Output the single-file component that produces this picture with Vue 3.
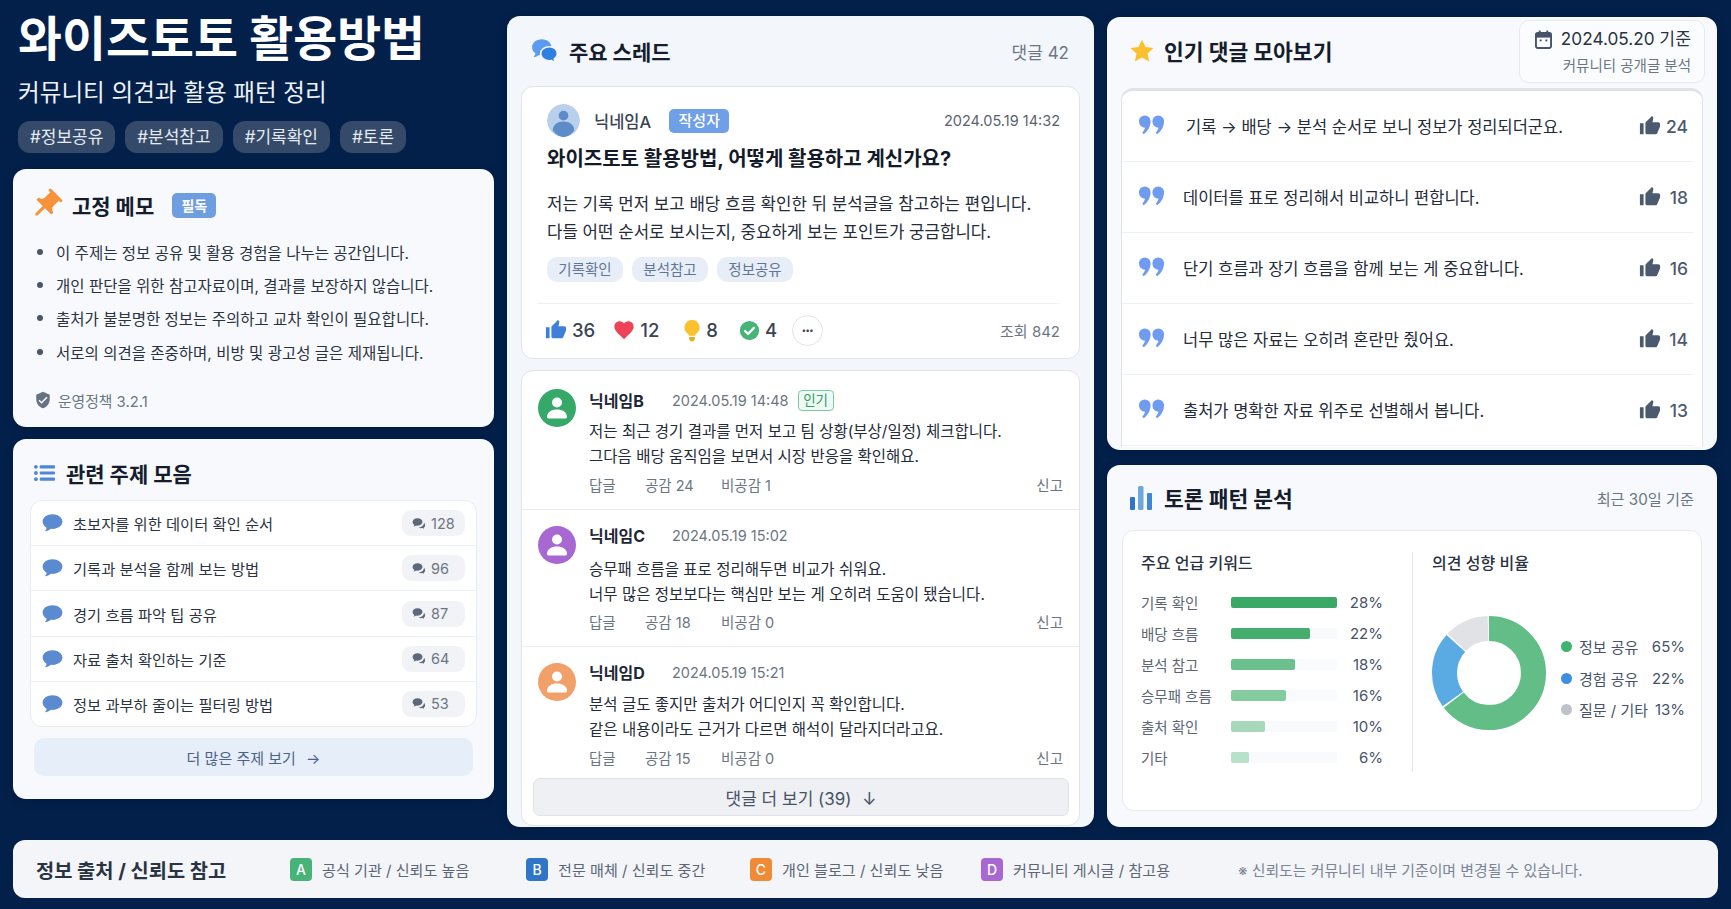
<template>
  <div class="page">
    <svg class="icon-defs" width="0" height="0" aria-hidden="true">
      <symbol id="thumb" viewBox="0 0 24 24">
        <path d="M1 21h4V9H1v12zm22-11c0-1.1-.9-2-2-2h-6.31l.95-4.57.03-.32c0-.41-.17-.79-.44-1.06L14.17 1 7.59 7.59C7.22 7.95 7 8.45 7 9v10c0 1.1.9 2 2 2h9c.83 0 1.54-.5 1.84-1.22l3.02-7.05c.09-.23.14-.47.14-.73v-2z" />
      </symbol>
      <symbol id="bubble" viewBox="0 0 24 22">
        <path d="M12 1C5.6 1 .7 4.6.7 9.4c0 2.9 1.8 5.4 4.6 6.9-.2 1.6-.9 3-2.1 4.2 2.6-.2 5-1.2 6.7-2.9.7.1 1.4.2 2.1.2 6.4 0 11.3-3.7 11.3-8.4S18.4 1 12 1z" />
      </symbol>
      <symbol id="chat" viewBox="0 0 24 22">
        <path d="M9.5 2C4.8 2 1 4.9 1 8.5c0 2 1.2 3.8 3 5-.1 1-.6 1.9-1.3 2.7 1.7-.1 3.2-.8 4.3-1.8.8.2 1.6.3 2.5.3 4.7 0 8.5-2.9 8.5-6.5S14.2 2 9.5 2z" />
        <path d="M20.5 9.5c.1 4.3-3.8 7.7-9 8 1.2 1 2.9 1.5 4.6 1.5.6 0 1.2-.1 1.8-.2.9.8 2 1.3 3.3 1.4-.5-.6-.9-1.3-1-2.1 1.4-.9 2.3-2.3 2.3-3.8 0-1.9-1-3.6-2-4.8z" />
      </symbol>
      <symbol id="quote" viewBox="0 0 26 20">
        <path d="M6 0a6 6 0 0 1 6 6.5c0 5-3 10-7 13L3.3 18c1.6-1.7 2.5-3.2 3-5.1A6.3 6.3 0 0 1 0 6.5 6 6 0 0 1 6 0z" />
        <path d="M20 0a6 6 0 0 1 6 6.5c0 5-3 10-7 13L17.3 18c1.6-1.7 2.5-3.2 3-5.1A6.3 6.3 0 0 1 14 6.5 6 6 0 0 1 20 0z" />
      </symbol>
    </svg>

    <div class="left-col">
      <header class="hero">
        <h1>와이즈토토 활용방법</h1>
        <p>커뮤니티 의견과 활용 패턴 정리</p>
        <div class="hero-tags">
          <span v-for="tag in heroTags" :key="tag">{{ tag }}</span>
        </div>
      </header>

      <section class="card memo">
        <div class="card-head">
          <svg class="pin" viewBox="0 0 24 24">
            <path transform="rotate(45 12 12)" d="M16 9V4h1c.55 0 1-.45 1-1s-.45-1-1-1H7c-.55 0-1 .45-1 1s.45 1 1 1h1v5c0 1.66-1.34 3-3 3v2h5.97v7l1 1 1-1v-7H19v-2c-1.66 0-3-1.34-3-3z" />
          </svg>
          <h2>고정 메모</h2>
          <span class="must">필독</span>
        </div>
        <ul>
          <li v-for="note in notes" :key="note">{{ note }}</li>
        </ul>
        <div class="policy">
          <svg viewBox="0 0 24 24">
            <path d="M12 1L3 5v6c0 5.55 3.84 10.74 9 12 5.16-1.26 9-6.45 9-12V5l-9-4zm-2 16l-4-4 1.41-1.41L10 14.17l6.59-6.59L18 9l-8 8z" />
          </svg>
          운영정책 3.2.1
        </div>
      </section>

      <section class="card topics">
        <div class="card-head">
          <svg class="list-icon" viewBox="0 0 22 18">
            <circle cx="2" cy="2.5" r="2" />
            <circle cx="2" cy="9" r="2" />
            <circle cx="2" cy="15.5" r="2" />
            <rect x="6" y="1" width="16" height="3.2" rx="1" />
            <rect x="6" y="7.4" width="16" height="3.2" rx="1" />
            <rect x="6" y="13.8" width="16" height="3.2" rx="1" />
          </svg>
          <h2>관련 주제 모음</h2>
        </div>
        <div class="topic-list">
          <div v-for="topic in topics" :key="topic.title" class="topic-row">
            <svg class="topic-bubble"><use href="#bubble" /></svg>
            <span class="topic-title">{{ topic.title }}</span>
            <span class="topic-count">
              <svg><use href="#chat" /></svg>
              {{ topic.count }}
            </span>
          </div>
        </div>
        <button class="more-topics">더 많은 주제 보기 <span>→</span></button>
      </section>
    </div>

    <section class="card thread">
      <div class="thread-head">
        <svg class="thread-icon" viewBox="0 0 26 24">
          <path fill="#5b9cf0" d="M10 1C4.9 1 1 4.3 1 8.5c0 2.3 1.2 4.3 3.1 5.7-.2 1.3-.8 2.5-1.7 3.4 2-.1 3.7-.9 5-2 .8.2 1.7.3 2.6.3 5.1 0 9-3.2 9-7.4S15.1 1 10 1z" />
          <path fill="#2f7fe0" stroke="#f3f6fa" stroke-width="1.5" d="M17 8c-4.4 0-8 2.9-8 6.5s3.6 6.5 8 6.5c.7 0 1.4-.1 2-.2 1 .9 2.3 1.5 3.9 1.6-.7-.8-1.2-1.7-1.4-2.8 1.7-1.2 3-3 3-5.1C24.5 10.900 21.4 8 17 8z" />
        </svg>
        <h2>주요 스레드</h2>
        <span class="thread-count">댓글 42</span>
      </div>

      <article class="post">
        <div class="post-meta">
          <svg class="post-avatar" viewBox="0 0 34 34">
            <circle cx="17" cy="17" r="17" fill="#b9d0ec" />
            <circle cx="17" cy="12" r="5" fill="#5d8cc9" />
            <path fill="#5d8cc9" d="M6 27c0-6 5-9 11-9s11 3 11 9c-3 4.5-7 7-11 7s-8-2.5-11-7z" />
          </svg>
          <span class="post-name">닉네임A</span>
          <span class="author-badge">작성자</span>
          <span class="post-date">2024.05.19 14:32</span>
        </div>
        <h3>와이즈토토 활용방법, 어떻게 활용하고 계신가요?</h3>
        <p>저는 기록 먼저 보고 배당 흐름 확인한 뒤 분석글을 참고하는 편입니다.<br />다들 어떤 순서로 보시는지, 중요하게 보는 포인트가 궁금합니다.</p>
        <div class="post-tags">
          <span v-for="tag in postTags" :key="tag">{{ tag }}</span>
        </div>
        <div class="reactions">
          <span class="reaction r-like">
            <svg viewBox="0 0 24 24" fill="#3f7fd9"><use href="#thumb" /></svg>36
          </span>
          <span class="reaction r-heart">
            <svg viewBox="0 0 24 24"><path fill="#ee4256" d="M12 22l-1.6-1.5C5 15.6 1.5 12.4 1.5 8.3 1.5 5 4 2.5 7.3 2.5c1.8 0 3.6.9 4.7 2.3 1.1-1.4 2.9-2.3 4.7-2.3 3.3 0 5.8 2.5 5.8 5.8 0 4.1-3.5 7.3-8.9 12.2L12 22z" /></svg>12
          </span>
          <span class="reaction r-bulb">
            <svg viewBox="0 0 20 26">
              <path fill="#fbc02d" d="M10 1a8.5 8.5 0 0 0-5 15.4c1 .8 1.5 1.7 1.6 2.6h6.8c.1-.9.6-1.8 1.6-2.6A8.5 8.5 0 0 0 10 1z" />
              <path fill="#e8ac20" d="M6.8 20.3h6.4v1.8a3.2 3.2 0 0 1-6.4 0z" />
            </svg>8
          </span>
          <span class="reaction r-check">
            <svg viewBox="0 0 24 24">
              <circle cx="12" cy="12" r="11" fill="#47b377" />
              <path fill="none" stroke="#fff" stroke-width="2.6" stroke-linecap="round" stroke-linejoin="round" d="M7 12.5l3.4 3.4L17 9" />
            </svg>4
          </span>
          <span class="more-dots">•••</span>
          <span class="views">조회 842</span>
        </div>
      </article>

      <div class="comments">
        <div v-for="c in comments" :key="c.name" class="comment">
          <svg class="comment-avatar" viewBox="0 0 38 38">
            <circle cx="19" cy="19" r="19" :fill="c.color" />
            <circle cx="19" cy="13.5" r="5" fill="#fff" />
            <path fill="#fff" d="M9 28c0-5 4.5-7.5 10-7.5S29 23 29 28c0 1-1 1.5-2 1.5H11c-1 0-2-.5-2-1.5z" />
          </svg>
          <div class="comment-main">
            <div class="comment-meta">
              <strong>{{ c.name }}</strong>
              <span class="comment-date">{{ c.date }}</span>
              <span v-if="c.hot" class="hot">인기</span>
            </div>
            <p>{{ c.line1 }}<br />{{ c.line2 }}</p>
            <div class="comment-actions">
              <span class="a-reply">답글</span>
              <span class="a-like">공감 {{ c.up }}</span>
              <span>비공감 {{ c.down }}</span>
              <span class="a-report">신고</span>
            </div>
          </div>
        </div>
        <button class="more-comments">댓글 더 보기 (39) <span>↓</span></button>
      </div>
    </section>

    <div class="right-col">
      <section class="card popular">
        <div class="card-head">
          <svg class="star" viewBox="0 0 24 24">
            <path fill="#fbc02d" d="M12 1.5l3.2 6.9 7.5.9-5.6 5.1 1.5 7.4L12 18.1l-6.6 3.700 1.5-7.4L1.3 9.3l7.5-.9z" />
          </svg>
          <h2>인기 댓글 모아보기</h2>
        </div>
        <div class="date-box">
          <div class="date-main">
            <svg viewBox="0 0 18 20">
              <rect x="1" y="3" width="16" height="16" rx="2" fill="none" stroke="#47536a" stroke-width="2" />
              <rect x="1" y="3" width="16" height="5" fill="#47536a" />
              <rect x="4" y="0.5" width="2" height="4" fill="#47536a" />
              <rect x="12" y="0.5" width="2" height="4" fill="#47536a" />
              <rect x="5" y="10" width="2" height="2" fill="#47536a" />
              <rect x="11" y="10" width="2" height="2" fill="#47536a" />
            </svg>
            2024.05.20 기준
          </div>
          <div class="date-sub">커뮤니티 공개글 분석</div>
        </div>
        <div class="popular-list">
          <div v-for="item in popular" :key="item.text" class="popular-row">
            <svg class="quote"><use href="#quote" /></svg>
            <span class="popular-text">{{ item.text }}</span>
            <svg class="popular-thumb"><use href="#thumb" /></svg>
            <span class="popular-num">{{ item.likes }}</span>
          </div>
        </div>
      </section>

      <section class="card pattern">
        <div class="card-head">
          <svg class="bars-icon" viewBox="0 0 22 24">
            <rect x="0" y="11" width="5" height="13" rx="1" fill="#2f76c9" />
            <rect x="8" y="0" width="5.5" height="24" rx="1.5" fill="#6fa6dc" />
            <rect x="17" y="7" width="5" height="17" rx="1" fill="#3f86d6" />
          </svg>
          <h2>토론 패턴 분석</h2>
          <span class="period">최근 30일 기준</span>
        </div>
        <div class="pattern-body">
          <div class="keywords">
            <h4>주요 언급 키워드</h4>
            <div v-for="k in keywords" :key="k.label" class="kw-row">
              <span class="kw-label">{{ k.label }}</span>
              <span class="kw-track"><i :style="{ width: k.width + 'px', background: k.color }"></i></span>
              <span class="kw-pct">{{ k.pct }}%</span>
            </div>
          </div>
          <div class="opinions">
            <h4>의견 성향 비율</h4>
            <div class="opinion-body">
              <svg class="donut" viewBox="0 0 114 114">
                <circle
                  v-for="seg in segments"
                  :key="seg.color"
                  cx="57" cy="57" r="44.5" fill="none"
                  stroke-width="25"
                  :stroke="seg.color"
                  :stroke-dasharray="seg.dash"
                  :stroke-dashoffset="seg.offset"
                  transform="rotate(-90 57 57)"
                />
              </svg>
              <div class="legend">
                <div v-for="l in legend" :key="l.label" class="legend-row">
                  <i :style="{ background: l.color }"></i>
                  <span>{{ l.label }}</span>
                  <b>{{ l.pct }}%</b>
                </div>
              </div>
            </div>
          </div>
        </div>
      </section>
    </div>

    <footer class="sources">
      <h2>정보 출처 / 신뢰도 참고</h2>
      <div v-for="s in sources" :key="s.key" class="source">
        <span class="source-key" :style="{ background: s.color }">{{ s.key }}</span>
        {{ s.label }}
      </div>
      <div class="source-note">※ 신뢰도는 커뮤니티 내부 기준이며 변경될 수 있습니다.</div>
    </footer>
  </div>
</template>

<script setup>
const heroTags = ['#정보공유', '#분석참고', '#기록확인', '#토론']
const postTags = ['기록확인', '분석참고', '정보공유']

const notes = [
  '이 주제는 정보 공유 및 활용 경험을 나누는 공간입니다.',
  '개인 판단을 위한 참고자료이며, 결과를 보장하지 않습니다.',
  '출처가 불분명한 정보는 주의하고 교차 확인이 필요합니다.',
  '서로의 의견을 존중하며, 비방 및 광고성 글은 제재됩니다.'
]

const topics = [
  { title: '초보자를 위한 데이터 확인 순서', count: 128 },
  { title: '기록과 분석을 함께 보는 방법', count: 96 },
  { title: '경기 흐름 파악 팁 공유', count: 87 },
  { title: '자료 출처 확인하는 기준', count: 64 },
  { title: '정보 과부하 줄이는 필터링 방법', count: 53 }
]

const comments = [
  {
    name: '닉네임B', date: '2024.05.19 14:48', hot: true, color: '#36a867',
    line1: '저는 최근 경기 결과를 먼저 보고 팀 상황(부상/일정) 체크합니다.',
    line2: '그다음 배당 움직임을 보면서 시장 반응을 확인해요.',
    up: 24, down: 1
  },
  {
    name: '닉네임C', date: '2024.05.19 15:02', hot: false, color: '#a868d2',
    line1: '승무패 흐름을 표로 정리해두면 비교가 쉬워요.',
    line2: '너무 많은 정보보다는 핵심만 보는 게 오히려 도움이 됐습니다.',
    up: 18, down: 0
  },
  {
    name: '닉네임D', date: '2024.05.19 15:21', hot: false, color: '#f2a06a',
    line1: '분석 글도 좋지만 출처가 어디인지 꼭 확인합니다.',
    line2: '같은 내용이라도 근거가 다르면 해석이 달라지더라고요.',
    up: 15, down: 0
  }
]

const popular = [
  { text: '기록 → 배당 → 분석 순서로 보니 정보가 정리되더군요.', likes: 24 },
  { text: '데이터를 표로 정리해서 비교하니 편합니다.', likes: 18 },
  { text: '단기 흐름과 장기 흐름을 함께 보는 게 중요합니다.', likes: 16 },
  { text: '너무 많은 자료는 오히려 혼란만 줬어요.', likes: 14 },
  { text: '출처가 명확한 자료 위주로 선별해서 봅니다.', likes: 13 }
]

const keywords = [
  { label: '기록 확인', pct: 28, width: 106, color: '#3aa866' },
  { label: '배당 흐름', pct: 22, width: 79, color: '#45ae6d' },
  { label: '분석 참고', pct: 18, width: 64, color: '#6cc08d' },
  { label: '승무패 흐름', pct: 16, width: 55, color: '#85cba0' },
  { label: '출처 확인', pct: 10, width: 34, color: '#a5d9b9' },
  { label: '기타', pct: 6, width: 18, color: '#b7e1c8' }
]

const legend = [
  { label: '정보 공유', pct: 65, color: '#3fb36f' },
  { label: '경험 공유', pct: 22, color: '#3f8fdc' },
  { label: '질문 / 기타', pct: 13, color: '#bfc3c9' }
]

const donutColors = ['#62bd87', '#5aaae3', '#e0e2e5']
const circumference = 2 * Math.PI * 44.5
let used = 0
const segments = legend.map((l, i) => {
  const len = (l.pct / 100) * circumference
  const seg = {
    color: donutColors[i],
    dash: `${len - 1.5} ${circumference - len + 1.5}`,
    offset: -used
  }
  used += len
  return seg
})

const sources = [
  { key: 'A', label: '공식 기관 / 신뢰도 높음', color: '#47b377' },
  { key: 'B', label: '전문 매체 / 신뢰도 중간', color: '#2f76c9' },
  { key: 'C', label: '개인 블로그 / 신뢰도 낮음', color: '#f08a35' },
  { key: 'D', label: '커뮤니티 게시글 / 참고용', color: '#a868d2' }
]
</script>

<style>
html,
body {
  margin: 0;
  background: #02204a;
}
</style>

<style scoped>
.page {
  box-sizing: border-box;
  width: 1731px;
  height: 909px;
  overflow: hidden;
  padding: 16px 13px 11px;
  display: grid;
  grid-template-columns: 481px 587px 610px;
  grid-template-rows: 811px 58px;
  column-gap: 13px;
  row-gap: 13px;
  background: #02204a;
  color: #1b2434;
  font-family: Inter, "Noto Sans CJK KR", sans-serif;
}

.icon-defs {
  position: absolute;
}

h1, h2, h3, h4, p, ul {
  margin: 0;
  padding: 0;
}

button {
  font-family: inherit;
  cursor: pointer;
}

.card {
  box-sizing: border-box;
  background: #f7f9fc;
  border-radius: 13px;
  box-shadow: 0 2px 8px rgba(0, 10, 40, 0.25);
}

.card-head {
  display: flex;
  align-items: center;
}

.card-head h2 {
  font-size: 21.5px;
  font-weight: 700;
  color: #151d2c;
}

/* left column */
.left-col {
  display: flex;
  flex-direction: column;
}

.hero {
  height: 153px;
  padding-left: 5px;
  color: #fff;
}

.hero h1 {
  font-size: 47.8px;
  line-height: 52px;
  font-weight: 700;
  margin-top: -3px;
}

.hero p {
  font-size: 23.6px;
  line-height: 32px;
  margin-top: 12px;
  color: #eef2f8;
}

.hero-tags {
  display: flex;
  gap: 10px;
  margin-top: 12px;
}

.hero-tags span {
  height: 32px;
  line-height: 32px;
  padding: 0 12px;
  border-radius: 12px;
  background: #354a69;
  color: #e6ebf3;
  font-size: 17px;
}

.memo {
  height: 258px;
  padding: 18px 21px 0;
}

.pin {
  width: 36px;
  height: 36px;
  fill: #f5923a;
  margin-left: -6px;
  margin-right: 8px;
}

.memo h2 {
  font-size: 21px;
}

.must {
  margin-left: 18px;
  width: 44px;
  height: 25px;
  line-height: 25px;
  text-align: center;
  border-radius: 5px;
  background: #6f9ee0;
  color: #fff;
  font-size: 14px;
  font-weight: 700;
}

.memo ul {
  margin-top: 12px;
  padding-left: 3px;
  list-style: none;
}

.memo li {
  display: flex;
  align-items: center;
  height: 33.4px;
  font-size: 15.5px;
  color: #2a3342;
}

.memo li::before {
  content: "";
  flex: none;
  width: 6px;
  height: 6px;
  margin-right: 13px;
  border-radius: 50%;
  background: #4a5668;
}

.policy {
  display: flex;
  align-items: center;
  gap: 6px;
  margin-top: 21px;
  font-size: 14.8px;
  color: #6b7684;
}

.policy svg {
  width: 18px;
  height: 18px;
  fill: #667284;
}

.topics {
  height: 360px;
  margin-top: 12px;
  padding: 19px 17px 0;
}

.topics h2 {
  font-size: 21px;
}

.list-icon {
  width: 21px;
  height: 18px;
  margin-left: 4px;
  margin-right: 11px;
  fill: #4f86d6;
}

.topic-list {
  display: flex;
  flex-direction: column;
  margin-top: 12px;
  height: 227px;
  box-sizing: border-box;
  background: #fff;
  border: 1px solid #e8ecf2;
  border-radius: 12px;
}

.topic-row {
  flex: 1;
  display: flex;
  align-items: center;
  padding: 0 11px;
  border-bottom: 1px solid #edf0f4;
  box-sizing: border-box;
}

.topic-row:last-child {
  border-bottom: 0;
}

.topic-bubble {
  width: 21px;
  height: 20px;
  fill: #5a8ad0;
  margin-right: 10px;
}

.topic-title {
  flex: 1;
  font-size: 15.3px;
  color: #2a3342;
}

.topic-count {
  display: flex;
  align-items: center;
  gap: 5px;
  box-sizing: border-box;
  width: 63px;
  height: 26px;
  padding-left: 10px;
  border-radius: 9px;
  background: #f1f3f7;
  color: #6b7684;
  font-size: 14.5px;
}

.topic-count svg {
  width: 14px;
  height: 13px;
  fill: #5d6878;
}

.more-topics {
  display: block;
  width: 439px;
  height: 38px;
  margin: 11px 0 0 4px;
  border: 0;
  border-radius: 10px;
  background: #e6eef9;
  color: #4d6288;
  font-size: 15px;
}

.more-topics span {
  margin-left: 6px;
}

/* thread */
.thread {
  height: 811px;
  padding: 0 14px;
  background: #f3f6fa;
}

.thread-head {
  display: flex;
  align-items: center;
  height: 70px;
}

.thread-icon {
  width: 28px;
  height: 26px;
  margin: 0 10px;
}

.thread-head h2 {
  flex: 1;
  font-size: 21px;
  font-weight: 700;
  color: #151d2c;
}

.thread-count {
  margin-right: 11px;
  font-size: 17px;
  color: #6b7684;
}

.post {
  box-sizing: border-box;
  height: 273px;
  padding: 0 19px 0 25px;
  background: #fff;
  border: 1px solid #dfe4ea;
  border-radius: 12px;
}

.post-meta {
  display: flex;
  align-items: center;
  height: 33px;
  margin-top: 17px;
}

.post-avatar {
  width: 33px;
  height: 33px;
  border-radius: 50%;
  margin-right: 14px;
}

.post-name {
  font-size: 16.5px;
  color: #3a4454;
  font-weight: 500;
}

.author-badge {
  margin-left: 18px;
  width: 60px;
  height: 24px;
  line-height: 24px;
  text-align: center;
  border-radius: 5px;
  background: #6f9fe6;
  color: #fff;
  font-size: 15px;
  font-weight: 500;
}

.post-date {
  margin-left: auto;
  font-size: 14.5px;
  color: #59636f;
}

.post h3 {
  margin-top: 8px;
  font-size: 20px;
  line-height: 28px;
  font-weight: 700;
  color: #141b28;
}

.post p {
  margin-top: 17px;
  font-size: 16.8px;
  line-height: 28px;
  color: #242c3a;
}

.post-tags {
  display: flex;
  gap: 9px;
  margin-top: 11px;
}

.post-tags span {
  width: 76px;
  height: 25px;
  line-height: 25px;
  text-align: center;
  border-radius: 10px;
  background: #e8eef7;
  color: #5f7698;
  font-size: 14.5px;
}

.reactions {
  display: flex;
  align-items: center;
  height: 52px;
  margin: 21px 0 0 -10px;
  padding-left: 8px;
  border-top: 1px solid #eef1f4;
  font-size: 18.5px;
  color: #3a4454;
}

.reaction {
  display: flex;
  align-items: center;
  font-weight: 500;
}

.reaction svg {
  margin-right: 5px;
}

.r-like svg {
  width: 22px;
  height: 22px;
}

.r-heart {
  margin-left: 18px;
}

.r-heart svg {
  width: 22px;
  height: 22px;
}

.r-bulb {
  margin-left: 24px;
}

.r-bulb svg {
  width: 18px;
  height: 23px;
}

.r-check {
  margin-left: 21px;
}

.r-check svg {
  width: 21px;
  height: 21px;
}

.more-dots {
  width: 31px;
  height: 31px;
  margin-left: 15px;
  text-align: center;
  box-sizing: border-box;
  border: 1px solid #dfe4ea;
  border-radius: 50%;
  font-size: 8px;
  font-weight: 700;
  line-height: 29px;
  color: #3a4454;
}

.views {
  margin-left: auto;
  font-size: 15px;
  color: #6b7684;
}

.comments {
  box-sizing: border-box;
  height: 456px;
  margin-top: 11px;
  background: #fff;
  border: 1px solid #dfe4ea;
  border-radius: 12px;
}

.comment {
  display: flex;
  box-sizing: border-box;
  height: 137px;
  padding: 14px 16px 0;
  border-bottom: 1px solid #e9edf1;
}

.comment:first-child {
  height: 139px;
  padding-top: 18px;
}

.comment:last-of-type {
  border-bottom: 0;
  height: 131px;
}

.comment-avatar {
  flex: none;
  width: 38px;
  height: 38px;
  margin: 2px 13px 0 0;
}

.comment:first-child .comment-avatar {
  margin-top: 0;
}

.comment-main {
  flex: 1;
}

.comment-meta {
  display: flex;
  align-items: center;
  height: 22px;
}

.comment-meta strong {
  width: 83px;
  font-size: 16px;
  font-weight: 700;
  color: #1e2737;
}

.comment-date {
  font-size: 14.5px;
  color: #6b7684;
}

.hot {
  margin-left: 9px;
  width: 36px;
  height: 21px;
  line-height: 19px;
  box-sizing: border-box;
  text-align: center;
  border: 1px solid #7cc9a0;
  border-radius: 4px;
  background: #eefaf3;
  color: #2f9e6a;
  font-size: 13.5px;
}

.comment-main p {
  margin-top: 11px;
  font-size: 15.5px;
  line-height: 25px;
  color: #242c3a;
}

.comment:first-child .comment-main p {
  margin-top: 8px;
}

.comment:last-of-type .comment-main p {
  margin-top: 9px;
}

.comment-actions {
  display: flex;
  margin-top: 6px;
  font-size: 14.5px;
  line-height: 20px;
  color: #6b7684;
}

.comment:first-child .comment-actions,
.comment:last-of-type .comment-actions {
  margin-top: 7px;
}

.a-reply {
  width: 56px;
}

.a-like {
  width: 76px;
}

.a-report {
  margin-left: auto;
}

.more-comments {
  display: block;
  width: 536px;
  height: 38px;
  margin: 0 0 0 11px;
  border: 1px solid #dfe3e9;
  border-radius: 7px;
  background: #eef0f4;
  color: #475264;
  font-size: 17px;
}

.more-comments span {
  margin-left: 6px;
}

/* right column */
.right-col {
  display: flex;
  flex-direction: column;
  gap: 15px;
}

.popular {
  position: relative;
  height: 433px;
  padding: 0 14px;
  margin-top: 1px;
}

.popular .card-head {
  height: 71px;
  padding-bottom: 4px;
  box-sizing: border-box;
}

.star {
  width: 26px;
  height: 26px;
  margin: 0 9px 0 8px;
}

.date-box {
  position: absolute;
  top: 3px;
  right: 12px;
  box-sizing: border-box;
  width: 186px;
  height: 63px;
  padding: 6px 13px 0 0;
  text-align: right;
  background: #fbfcfe;
  border: 1px solid #e6eaf0;
  border-radius: 10px;
}

.date-main {
  display: flex;
  align-items: center;
  justify-content: flex-end;
  gap: 9px;
  font-size: 17.2px;
  line-height: 24px;
  color: #2a3342;
}

.date-main svg {
  width: 17px;
  height: 19px;
}

.date-sub {
  margin-top: 5px;
  font-size: 14.5px;
  line-height: 20px;
  color: #6b7684;
}

.popular-list {
  box-sizing: border-box;
  height: 359px;
  background: #fff;
  border: 1px solid #e1e5eb;
  border-top: 3px solid #dfe3e9;
  border-bottom: 0;
  border-radius: 12px 12px 0 0;
}

.popular-row {
  display: flex;
  align-items: center;
  box-sizing: border-box;
  height: 71px;
  margin-right: 9px;
  padding: 0 5px 0 17px;
  border-bottom: 1px solid #edf0f4;
}

.popular-row:first-child .popular-text {
  padding-left: 3px;
}

.quote {
  flex: none;
  width: 25px;
  height: 20px;
  margin-top: -2px;
  margin-right: 19px;
  fill: #6f9cf0;
}

.popular-text {
  flex: 1;
  font-size: 16.5px;
  color: #242c3a;
}

.popular-thumb {
  flex: none;
  width: 22px;
  height: 22px;
  fill: #4c5a70;
}

.popular-num {
  width: 27px;
  text-align: right;
  font-size: 17.5px;
  font-weight: 500;
  color: #4c5a70;
}

.pattern {
  height: 362px;
  padding: 0 15px;
}

.pattern .card-head {
  height: 65px;
}

.bars-icon {
  width: 22px;
  height: 24px;
  margin: 0 12px 0 8px;
}

.period {
  margin-left: auto;
  margin-right: 8px;
  font-size: 15.2px;
  color: #6b7684;
}

.pattern-body {
  display: flex;
  box-sizing: border-box;
  width: 580px;
  height: 281px;
  padding: 21px 0 0 18px;
  background: #fff;
  border: 1px solid #e6eaf0;
  border-radius: 12px;
}

.pattern-body h4 {
  font-size: 16px;
  line-height: 22px;
  font-weight: 500;
  color: #2a3342;
}

.keywords {
  width: 271px;
  height: 220px;
  margin-right: 19px;
  border-right: 1px solid #e1e5ea;
}

.keywords h4 {
  margin-bottom: 13px;
}

.kw-row {
  display: flex;
  align-items: center;
  height: 31px;
  width: 242px;
  font-size: 14.5px;
  color: #5c6675;
}

.kw-label {
  width: 90px;
}

.kw-track {
  width: 106px;
  height: 11px;
  border-radius: 2px;
  background: #f9fafb;
}

.kw-track i {
  display: block;
  height: 100%;
  border-radius: 2px;
}

.kw-pct {
  flex: 1;
  text-align: right;
  font-size: 15px;
  color: #47536a;
}

.opinions {
  flex: 1;
}

.opinion-body {
  display: flex;
  align-items: center;
  margin-top: 42px;
}

.donut {
  flex: none;
  width: 114px;
  height: 114px;
}

.legend {
  margin: 10px 0 0 15px;
  width: 124px;
}

.legend-row {
  display: flex;
  align-items: center;
  height: 31.5px;
  font-size: 15px;
  color: #47536a;
}

.legend-row i {
  width: 11px;
  height: 11px;
  margin-right: 7px;
  border-radius: 50%;
}

.legend-row b {
  margin-left: auto;
  font-weight: 400;
}

/* footer */
.sources {
  grid-column: 1 / -1;
  display: grid;
  grid-template-columns: 277px 236px 224px 231px 257px auto;
  align-items: center;
  width: 1705px;
  height: 58px;
  background: #f3f5f9;
  border-radius: 12px;
}

.sources h2 {
  padding-left: 23px;
  font-size: 19.8px;
  font-weight: 700;
  color: #2a3342;
}

.source {
  display: flex;
  align-items: center;
  gap: 10px;
  font-size: 15.1px;
  color: #5c6675;
}

.source-key {
  width: 22px;
  height: 23px;
  line-height: 23px;
  text-align: center;
  border-radius: 4px;
  color: #fff;
  font-size: 14px;
  font-weight: 500;
}

.source-note {
  font-size: 14.9px;
  color: #7b8594;
}
</style>
